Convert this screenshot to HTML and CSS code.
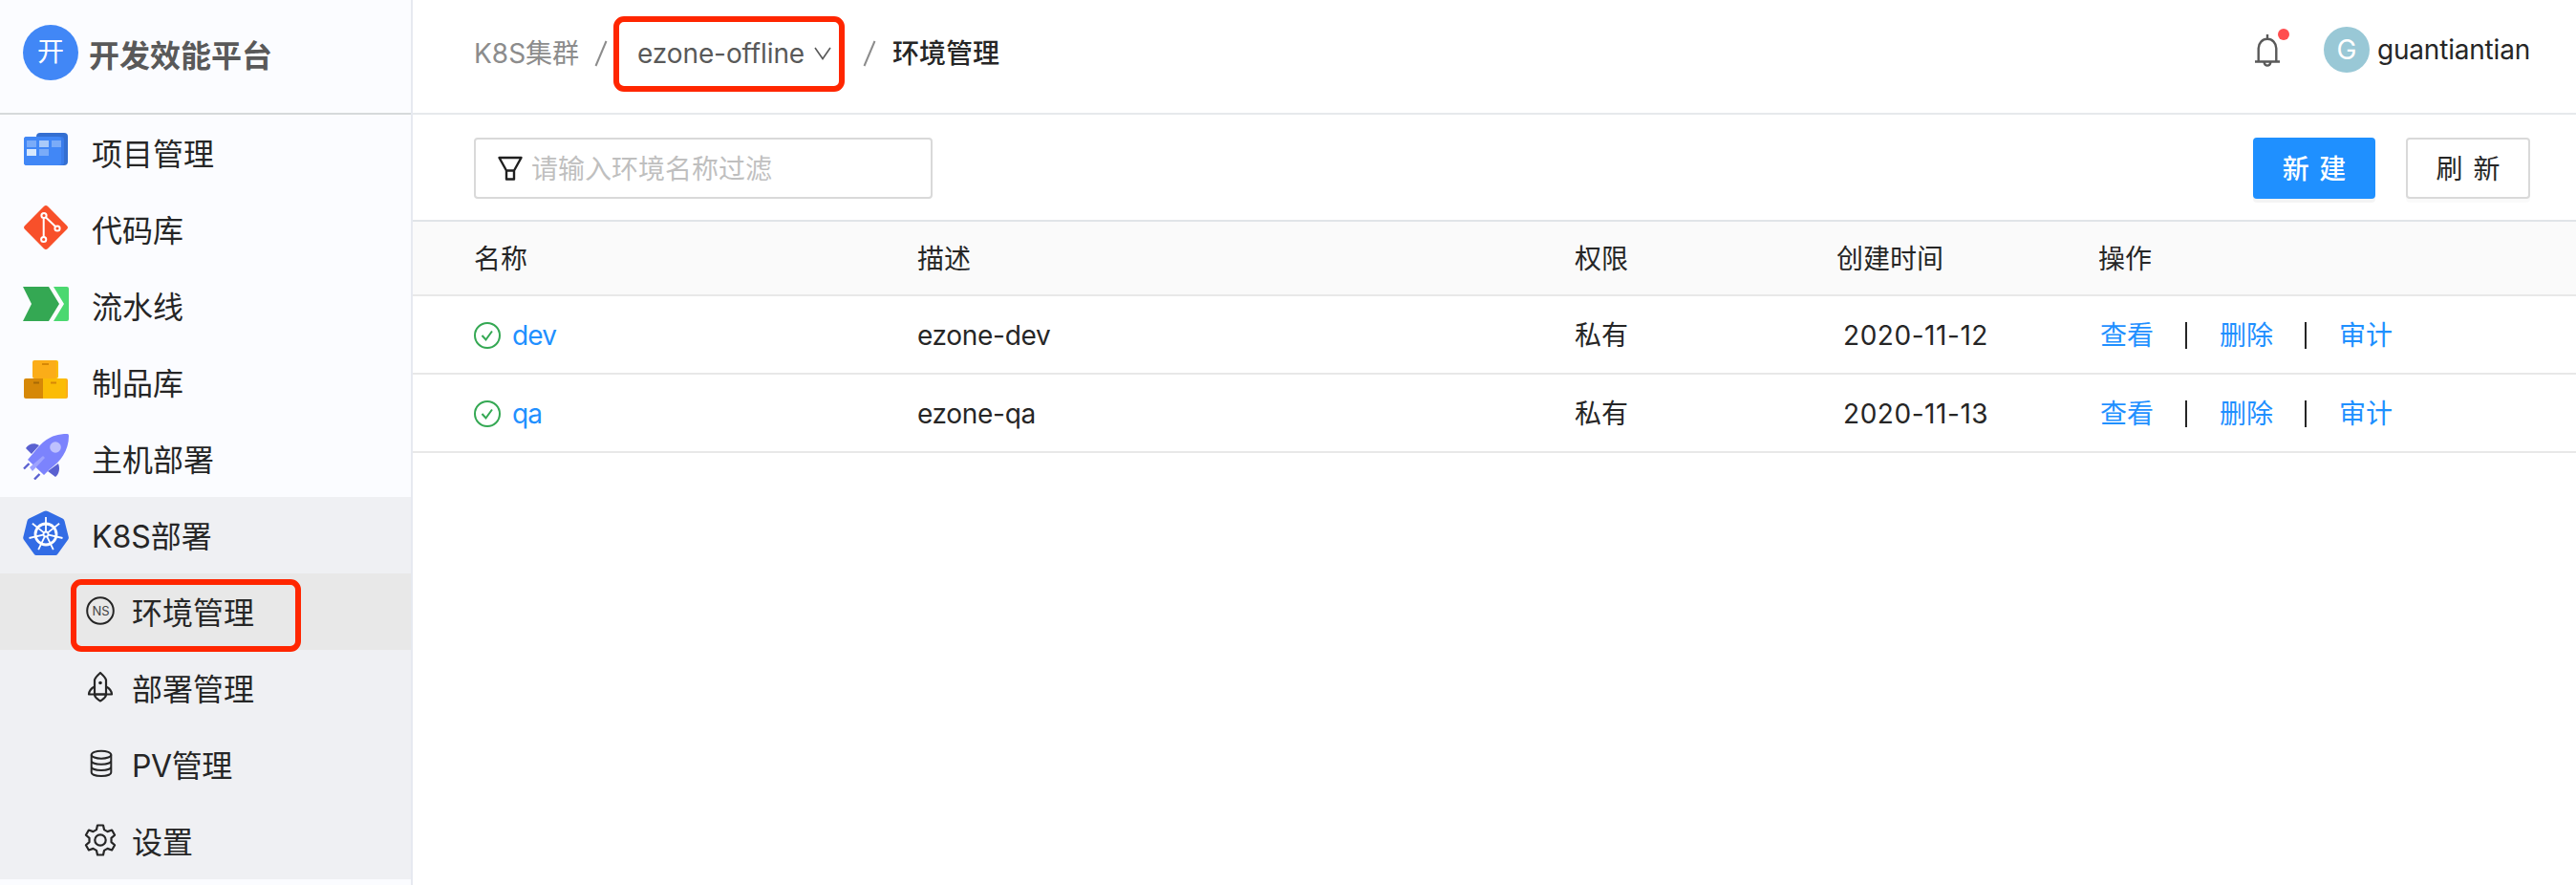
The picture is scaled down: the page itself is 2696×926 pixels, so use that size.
FILE: index.html
```html
<!DOCTYPE html>
<html lang="zh-CN">
<head>
    <meta charset="UTF-8">
    <meta name="viewport" content="width=device-width, initial-scale=1.0">
    <title>环境管理 - 开发效能平台</title>
    <link rel="stylesheet" href="styles.css">
</head>
<body>
    <aside class="sidebar">
        <div class="brand">
            <span class="brand-logo">开</span>
            <span class="brand-name">开发效能平台</span>
        </div>

        <nav class="menu">
            <a class="menu-item">
                <svg class="menu-icon" viewBox="0 2 48 48">
                    <rect x="14" y="7" width="33" height="34" rx="4" fill="#346fd1"/>
                    <rect x="1" y="11" width="42" height="30" rx="3" fill="#3a7cea"/>
                    <rect x="1" y="11" width="39" height="30" rx="3" fill="#4187f6"/>
                    <path d="M4 15h10v7H4zM30 15h10v7H30zM17 24h10v7H17z" fill="#7aabf8"/>
                    <path d="M17 15h10v7H17z" fill="#a9caf9"/>
                    <path d="M4 24h10v7H4z" fill="#d8e8fc"/>
                </svg>
                <span>项目管理</span>
            </a>
            <a class="menu-item">
                <svg class="menu-icon" viewBox="0 0 48 48">
                    <rect x="7" y="7" width="34" height="34" rx="3" transform="rotate(45 24 24)" fill="#f8502a"/>
                    <g fill="none" stroke="#fff" stroke-width="2">
                        <path d="M21.7 14.5v19.5M24 13.5l10 9.5"/>
                        <circle cx="22" cy="11.5" r="2.6"/>
                        <circle cx="36" cy="25" r="2.6"/>
                        <circle cx="21.7" cy="36.5" r="2.6"/>
                    </g>
                </svg>
                <span>代码库</span>
            </a>
            <a class="menu-item">
                <svg class="menu-icon" viewBox="0 0 48 48">
                    <path d="M0 6h27l11 18-11 18H0l9-18z" fill="#34a853"/>
                    <path d="M32 6h14a2 2 0 0 1 2 2v32a2 2 0 0 1-2 2H32l11-18z" fill="#4bd870"/>
                </svg>
                <span>流水线</span>
            </a>
            <a class="menu-item">
                <svg class="menu-icon" viewBox="0 1 48 48">
                    <rect x="14" y="4" width="23" height="19" rx="2" fill="#fbbc05"/>
                    <rect x="10" y="4" width="25" height="19" rx="2" fill="#fbad18"/>
                    <rect x="24" y="23" width="23" height="21" rx="2" fill="#fbad18"/>
                    <rect x="20" y="23" width="25" height="21" fill="#fbbc05"/>
                    <path d="M3 23h18v21H3a2 2 0 0 1-2-2V25a2 2 0 0 1 2-2z" fill="#d68807"/>
                    <path d="M20 7h7v2h-7zM29 26.5h6v2h-6z" fill="#d68807"/>
                    <path d="M11 26.5h6v2h-6z" fill="#a96a05"/>
                </svg>
                <span>制品库</span>
            </a>
            <a class="menu-item">
                <svg class="menu-icon" viewBox="0 0 48 48">
                    <path d="M3 15c3-5 9-6 14-3l-8 9zM37 31c2 5 1 11-3 14l-8-6z" fill="#5960d0"/>
                    <path d="M46.500 0Q48 0 48 2C48 18 39 29 28 37l-6 6L5 27l6-7C19 10 27 0 46.500 0z" fill="#7c83fd"/>
                    <path d="M7 35l14-12 2 2L10 39z" fill="#9da2fe"/>
                    <circle cx="34" cy="14" r="5.8" fill="#bec1fe"/>
                    <path d="M1 36.500l5.500-5.500M12 47.500l5.500-5.500" stroke="#5960d0" stroke-width="2.4"/>
                </svg>
                <span>主机部署</span>
            </a>
            <a class="menu-item open">
                <svg class="menu-icon" viewBox="0 0 48 48">
                    <path d="M24 .5q1 0 2 .6l15.500 7.400q1.500.8 2 2.500L47.800 28q.3 1.500-.7 2.800L36.500 45.500q-1 1.500-2.500 1.500H14q-1.500 0-2.500-1.500L.9 30.800Q0 29.500.3 28L4.500 11q.4-1.700 2-2.500L22 1.100q1-.6 2-.6z" fill="#326ce5"/>
                    <g fill="none" stroke="#fff">
                        <circle cx="24" cy="25" r="11" stroke-width="2.8"/>
                        <path d="M24 22V7M26.300 23.100l11.800-9.300M26.900 25.700l14.600 3.300M25.300 27.700l6.500 13.500M22.700 27.700l-6.500 13.500M21.100 25.700L6.500 29M21.700 23.100L9.900 13.800" stroke-width="1.8"/>
                        <circle cx="24" cy="25" r="2.5" stroke-width="1.8"/>
                    </g>
                </svg>
                <span>K8S部署</span>
            </a>

            <div class="submenu">
                <a class="submenu-item active">
                    <svg class="submenu-icon" viewBox="0 0 36 36">
                        <circle cx="18" cy="18" r="13.8" fill="none" stroke="#262626" stroke-width="2"/>
                        <text class="ns-text" x="18.5" y="23" text-anchor="middle">NS</text>
                    </svg>
                    <span>环境管理</span>
                    <i class="mark mark-menu"></i>
                </a>
                <a class="submenu-item">
                    <svg class="submenu-icon" viewBox="0 0 36 36" fill="none" stroke="#262626" stroke-width="2.2" stroke-linejoin="round">
                        <path d="M12 25.500V10.500Q12.500 8 18 3q5.500 5 6 7.500v15z"/>
                        <path d="M12 17.500q-5.500 2.500-6 8h24q-.5-5.500-6-8"/>
                        <path d="M12 25.500c0 4 3 4.500 6 7 3-2.500 6-3 6-7"/>
                        <circle cx="18" cy="13.5" r="1.8" fill="#262626" stroke="none"/>
                    </svg>
                    <span>部署管理</span>
                </a>
                <a class="submenu-item">
                    <svg class="submenu-icon" viewBox="0 0 36 36" fill="none" stroke="#262626" stroke-width="2">
                        <ellipse cx="19" cy="8.7" rx="10.3" ry="4"/>
                        <path d="M8.700 8.700v18.500c0 5 20.600 5 20.600 0V8.700M8.700 15c0 5 20.600 5 20.600 0M8.700 21.200c0 5 20.600 5 20.600 0"/>
                    </svg>
                    <span class="pv">PV管理</span>
                </a>
                <a class="submenu-item">
                    <svg class="submenu-icon" viewBox="0 0 36 36" fill="none" stroke="#262626" stroke-width="2.2" stroke-linejoin="round">
                        <path d="M15 2.500h6l1 4.600 3.500 2 4.600-1.600 3 5.200-3.600 3.200v4.200l3.600 3.200-3 5.200-4.600-1.600-3.500 2-1 4.600h-6l-1-4.600-3.500-2-4.600 1.600-3-5.200 3.600-3.200v-4.200l-3.600-3.200 3-5.200 4.600 1.600 3.500-2z"/>
                        <circle cx="18" cy="18" r="5.7"/>
                    </svg>
                    <span>设置</span>
                </a>
            </div>
        </nav>
    </aside>

    <main class="content">
        <header class="topbar">
            <div class="breadcrumb">
                <span class="crumb">K8S集群</span>
                <svg class="slash" viewBox="0 0 14 28"><path d="M1.500 27L12.500 1"/></svg>
                <span class="cluster-select">
                    ezone-offline
                    <svg class="chevron" viewBox="0 0 18 14"><path d="M1 1l8 11.500L17 1"/></svg>
                    <i class="mark mark-cluster"></i>
                </span>
                <svg class="slash" viewBox="0 0 14 28"><path d="M1.500 27L12.500 1"/></svg>
                <span class="crumb-current">环境管理</span>
            </div>
            <div class="user">
                <span class="bell">
                    <svg viewBox="0 0 26 34" fill="none" stroke="#595959" stroke-width="2.4">
                        <path d="M3.700 28V14.500a9.300 9.800 0 0 1 18.600 0V28M0 28.500h26M13 0v5M9.700 29.500c.8 4.200 5.800 4.200 6.600 0"/>
                    </svg>
                    <i class="dot"></i>
                </span>
                <span class="avatar">G</span>
                <span class="user-name">guantiantian</span>
            </div>
        </header>

        <div class="toolbar">
            <div class="search">
                <svg viewBox="0 0 26 26" fill="none" stroke="#1f1f1f" stroke-width="2.4" stroke-linejoin="round">
                    <path d="M1.500 2h23L17 15.500H9zM9 15.500V24.500h8V15.500"/>
                </svg>
                <span>请输入环境名称过滤</span>
            </div>
            <div class="actions">
                <button class="btn btn-primary">新 建</button>
                <button class="btn">刷 新</button>
            </div>
        </div>

        <div class="table">
            <div class="row head">
                <span>名称</span>
                <span>描述</span>
                <span>权限</span>
                <span>创建时间</span>
                <span>操作</span>
            </div>
            <div class="row">
                <span class="name">
                    <svg viewBox="0 0 28 28"><circle cx="14" cy="14" r="13"/><path d="M8.500 14l4 4.500 6.500-9"/></svg>
                    <a>dev</a>
                </span>
                <span class="desc">ezone-dev</span>
                <span>私有</span>
                <span class="date">2020-11-12</span>
                <span class="links"><a>查看</a><i></i><a>删除</a><i></i><a>审计</a></span>
            </div>
            <div class="row">
                <span class="name">
                    <svg viewBox="0 0 28 28"><circle cx="14" cy="14" r="13"/><path d="M8.500 14l4 4.500 6.500-9"/></svg>
                    <a>qa</a>
                </span>
                <span class="desc">ezone-qa</span>
                <span>私有</span>
                <span class="date">2020-11-13</span>
                <span class="links"><a>查看</a><i></i><a>删除</a><i></i><a>审计</a></span>
            </div>
        </div>
    </main>
</body>
</html>
```
FILE: styles.css
```css
* {
    box-sizing: border-box;
}
body {
    margin: 0;
    display: flex;
    height: 926px;
    overflow: hidden;
    background-color: #fff;
    color: #262626;
    font-family: Inter, "Noto Sans CJK SC", sans-serif;
    font-size: 28px;
    line-height: 40px;
    white-space: nowrap;
}
svg {
    display: block;
    flex: none;
}

/* sidebar */
.sidebar {
    flex: none;
    width: 432px;
    border-right: 2px solid #e6e9f0;
    background-color: #fbfcff;
}
.brand {
    display: flex;
    align-items: center;
    height: 120px;
    padding: 0 0 8px 24px;
    border-bottom: 2px solid #d6d9db;
}
.brand-logo {
    width: 58px;
    height: 58px;
    margin-right: 11px;
    border-radius: 50%;
    background-color: #4187f6;
    color: #fff;
    line-height: 56px;
    text-align: center;
}
.brand-name {
    margin-top: 8px;
    color: #595959;
    font-size: 32px;
    font-weight: 700;
}
.menu-item,
.submenu-item {
    display: flex;
    align-items: center;
    height: 80px;
    font-size: 32px;
}
.menu-item span,
.submenu-item span {
    padding-top: 3px;
}
.menu-item {
    padding-left: 24px;
}
.menu-item.open,
.submenu {
    background-color: #eff0f3;
}
.menu-icon {
    width: 48px;
    height: 48px;
    margin: 0 24px 4px 0;
}
.submenu-item {
    position: relative;
    padding-left: 87px;
}
.submenu-item.active {
    background-color: #e8e8e8;
}
.submenu-icon {
    width: 36px;
    height: 36px;
    margin: 0 15px 2px 0;
}
.ns-text {
    fill: #434343;
    font-size: 13px;
}
.pv {
    letter-spacing: -0.4px;
}

/* red highlight frames */
.mark {
    position: absolute;
    border: 6px solid #ff2600;
    border-radius: 11px;
}
.mark-menu {
    left: 74px;
    top: 6px;
    width: 241px;
    height: 76px;
    z-index: 1;
}
.mark-cluster {
    left: -25px;
    top: -19px;
    width: 242px;
    height: 79px;
}

/* content */
.content {
    flex: 1;
}
.topbar {
    display: flex;
    justify-content: space-between;
    height: 120px;
    padding: 36px 48px 0 64px;
    border-bottom: 2px solid #e6e9ec;
}
.breadcrumb {
    display: flex;
    align-items: center;
    height: 40px;
}
.crumb {
    width: 126px;
    color: #8c8c8c;
}
.slash {
    width: 14px;
    height: 28px;
    fill: none;
    stroke: #8c8c8c;
    stroke-width: 2;
}
.cluster-select {
    position: relative;
    display: flex;
    align-items: center;
    width: 236px;
    margin-left: 31px;
    color: #595959;
    letter-spacing: -0.1px;
}
.chevron {
    width: 18px;
    height: 14px;
    margin-left: 10px;
    fill: none;
    stroke: #595959;
    stroke-width: 1.6;
}
.crumb-current {
    margin-left: 17px;
    font-weight: 500;
}
.user {
    display: flex;
    align-items: center;
    height: 48px;
    margin-top: -8px;
}
.user-name {
    letter-spacing: -0.2px;
}
.bell {
    position: relative;
    margin-right: 46px;
}
.bell svg {
    width: 26px;
    height: 34px;
    margin-top: 2px;
}
.dot {
    position: absolute;
    left: 24px;
    top: -4px;
    width: 12px;
    height: 12px;
    border-radius: 50%;
    background-color: #ff4d4f;
}
.avatar {
    width: 48px;
    height: 48px;
    margin-right: 8px;
    border-radius: 50%;
    background-color: #99c8d6;
    color: #fff;
    line-height: 48px;
    text-align: center;
}

.toolbar {
    display: flex;
    align-items: center;
    justify-content: space-between;
    height: 112px;
    padding: 2px 48px 0 64px;
    border-bottom: 2px solid #e0e4e8;
}
.search {
    display: flex;
    align-items: center;
    width: 480px;
    height: 64px;
    padding-left: 23px;
    border: 2px solid #d9d9d9;
    border-radius: 4px;
    color: #bfbfbf;
}
.search svg {
    width: 26px;
    height: 26px;
    margin-right: 9px;
}
.search span {
    padding-top: 2px;
}
.actions {
    display: flex;
    gap: 32px;
}
.btn {
    width: 130px;
    height: 64px;
    padding: 2px 0 0;
    border: 2px solid #d9d9d9;
    border-radius: 4px;
    background-color: #fff;
    box-shadow: 0 4px 0 rgba(0, 0, 0, 0.02);
    color: #262626;
    font: inherit;
    word-spacing: 3px;
}
.btn-primary {
    width: 128px;
    border-color: #1f90ff;
    background-color: #1f90ff;
    box-shadow: 0 4px 0 rgba(0, 0, 0, 0.045);
    color: #fff;
    font-weight: 500;
}

/* table */
.row {
    display: grid;
    grid-template-columns: 464px 688px 274px 274px 1fr;
    align-items: center;
    height: 82px;
    padding-left: 64px;
    border-bottom: 2px solid #e8e8e8;
}
.row.head {
    height: 78px;
    background-color: #fafafa;
}
.row > span {
    padding-top: 1px;
}
.row a {
    color: #1f90ff;
}
.name,
.links {
    display: flex;
    align-items: center;
}
.name a {
    letter-spacing: -0.8px;
}
.name svg {
    width: 28px;
    height: 28px;
    margin-right: 12px;
    fill: none;
    stroke: #34a853;
    stroke-width: 2;
}
.desc {
    letter-spacing: -0.3px;
}
.date {
    padding-left: 7px;
    letter-spacing: 0.55px;
}
.links {
    padding-left: 2px;
}
.links i {
    width: 2px;
    height: 28px;
    margin: 0 34px 0 33px;
    background-color: #262626;
}
```
